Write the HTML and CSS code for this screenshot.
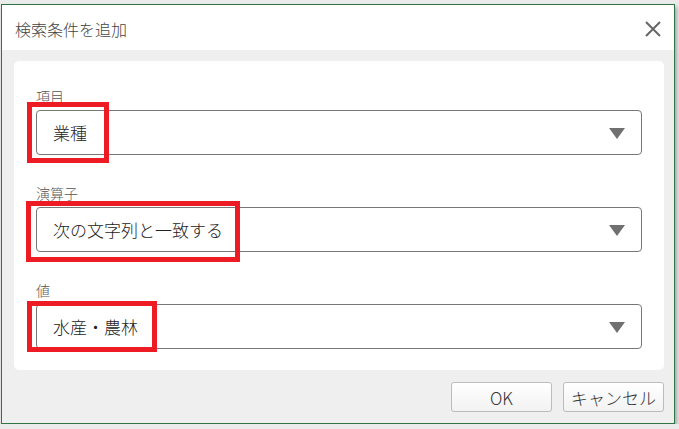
FILE: index.html
```html
<!DOCTYPE html>
<html lang="ja">
<head>
    <meta charset="UTF-8">
    <title>検索条件を追加</title>
    <link rel="stylesheet" href="styles.css">
</head>
<body>

<div class="dialog">
    <div class="dialog-header">
        <span class="dialog-title">検索条件を追加</span>
        <button class="close-button" aria-label="閉じる">
            <svg width="16" height="16" viewBox="0 0 16 16">
                <path d="M1 1 L15 15 M15 1 L1 15" stroke="#666" stroke-width="2" fill="none"/>
            </svg>
        </button>
    </div>

    <div class="dialog-body">
        <div class="panel">
            <div class="field">
                <div class="field-label">項目</div>
                <div class="select">
                    <span class="select-value">業種</span>
                    <span class="select-arrow"></span>
                </div>
                <div class="mark mark-item"></div>
            </div>

            <div class="field">
                <div class="field-label">演算子</div>
                <div class="select">
                    <span class="select-value">次の文字列と一致する</span>
                    <span class="select-arrow"></span>
                </div>
                <div class="mark mark-operator"></div>
            </div>

            <div class="field">
                <div class="field-label">値</div>
                <div class="select">
                    <span class="select-value">水産・農林</span>
                    <span class="select-arrow"></span>
                </div>
                <div class="mark mark-value"></div>
            </div>
        </div>

        <div class="dialog-footer">
            <button class="button">OK</button>
            <button class="button">キャンセル</button>
        </div>
    </div>
</div>

</body>
</html>
```

FILE: styles.css
```css
body {
    font-family: "Noto Sans CJK JP", "Noto Sans", sans-serif;
    font-weight: 300;
    background-color: #ebebeb;
    margin: 0;
    padding: 4px 0 0 1px;
}

.dialog {
    width: 674px;
    height: 420px;
    box-sizing: border-box;
    border: 1px solid #2f7545;
    background-color: #efefef;
    box-shadow: 2px 3px 4px rgba(0, 0, 0, 0.3);
    display: flex;
    flex-direction: column;
}

.dialog-header {
    height: 45px;
    background-color: white;
    display: flex;
    align-items: center;
    justify-content: space-between;
    padding: 0 13px 0 13px;
}

.dialog-title {
    font-size: 16px;
    color: #444;
    margin-top: 2px;
}

.close-button {
    background: none;
    border: none;
    padding: 0;
    width: 16px;
    height: 16px;
    cursor: pointer;
    margin-top: 2px;
}

.dialog-body {
    flex: 1;
    display: flex;
    flex-direction: column;
}

.panel {
    background-color: white;
    border-radius: 5px;
    margin: 11px 10px 0 12px;
    padding: 28px 22px 21px 22px;
}

.field {
    position: relative;
}

.field + .field {
    margin-top: 31px;
}

.field-label {
    font-size: 14px;
    line-height: 14px;
    color: #555;
    margin-bottom: 7px;
}

.select {
    height: 45px;
    box-sizing: border-box;
    border: 1px solid #777;
    border-radius: 4px;
    display: flex;
    align-items: center;
    justify-content: space-between;
    padding: 0 16px 0 16px;
}

.select-value {
    font-size: 17px;
    color: #222;
}

/* down triangle */
.select-arrow {
    width: 0;
    height: 0;
    border-left: 8px solid transparent;
    border-right: 8px solid transparent;
    border-top: 11px solid #707070;
    margin-top: 2px;
}

/* red annotation boxes */
.mark {
    position: absolute;
    border: 5px solid #ed1c24;
    box-sizing: border-box;
}

.mark-item {
    left: -9px;
    top: 13px;
    width: 82px;
    height: 61px;
}

.mark-operator {
    left: -10px;
    top: 15px;
    width: 214px;
    height: 61px;
}

.mark-value {
    left: -9px;
    top: 18px;
    width: 130px;
    height: 51px;
}

.dialog-footer {
    display: flex;
    justify-content: flex-end;
    gap: 11px;
    padding: 12px 10px 0 0;
}

.button {
    width: 101px;
    height: 30px;
    border: 1px solid #bcbcbc;
    border-radius: 3px;
    background: linear-gradient(#ffffff, #f2f2f2);
    font-family: "Noto Sans CJK JP", "Noto Sans", sans-serif;
    font-weight: 300;
    font-size: 17px;
    color: #333;
    padding: 0;
    cursor: pointer;
}
```
